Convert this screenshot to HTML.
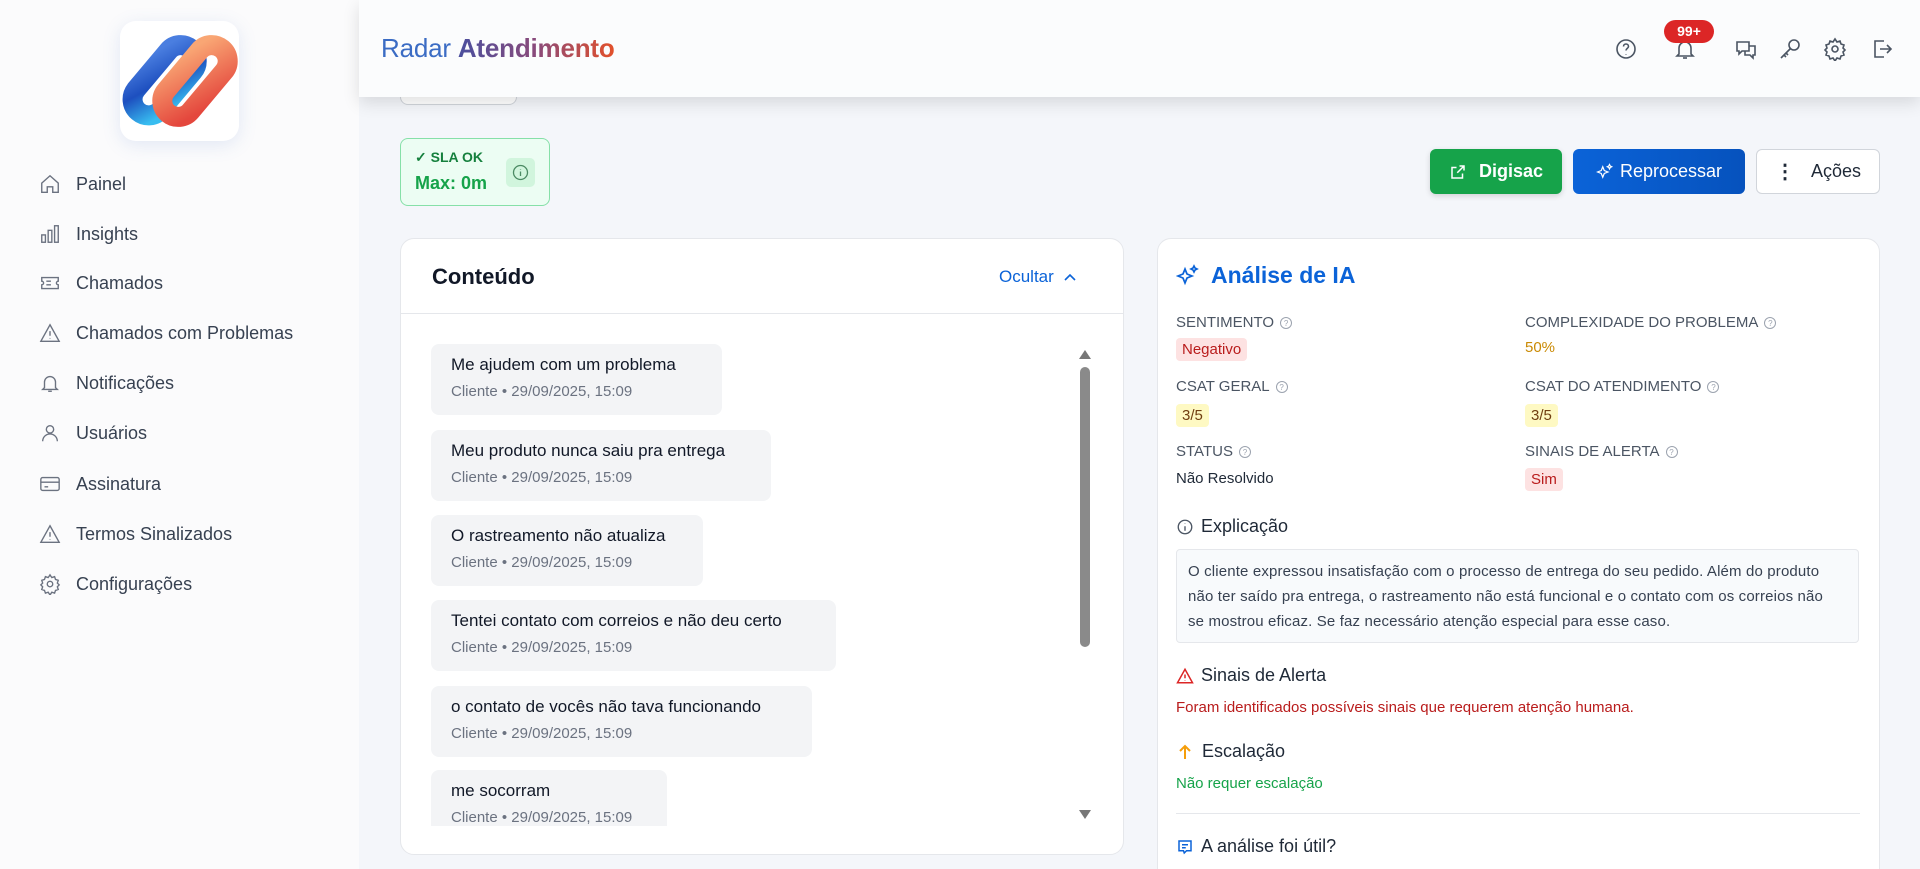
<!DOCTYPE html>
<html><head><meta charset="utf-8"><style>
*{box-sizing:border-box;margin:0;padding:0}
html,body{width:1920px;height:869px;overflow:hidden}
body{background:#f4f6fa;font-family:"Liberation Sans",sans-serif;color:#1f2937;position:relative}
.abs{position:absolute}
.side{left:0;top:0;width:359px;height:869px;background:#fbfbfc}
.logo{left:120px;top:21px;width:119px;height:120px;background:#fff;border-radius:16px;box-shadow:0 4px 18px rgba(80,120,200,.15);overflow:hidden}
.nav{left:39px;font-size:18px;color:#374151;display:flex;align-items:center;height:30px}
.nav svg{width:22px;height:22px;margin-right:15px;stroke:#6b7280;fill:none;stroke-width:1.5}
.hdr{left:359px;top:0;width:1561px;height:97px;background:#fbfcfd;box-shadow:0 6px 16px rgba(0,0,0,.12)}
.ic{top:37px;width:24px;height:24px;stroke:#4b5563;fill:none;stroke-width:1.6}
.btn{top:149px;height:45px;border-radius:6px;display:flex;align-items:center;justify-content:center;font-size:18px}
.card{background:#fff;border:1px solid #e5e7eb;border-radius:14px}
.msg{left:431px;height:71px;background:#f3f4f6;border-radius:8px;padding:11px 20px 0}
.msg .t{font-size:17px;color:#111827}
.msg .m{font-size:15px;color:#6b7280;margin-top:8px}
.lab{font-size:15px;color:#4b5563;display:flex;align-items:center}
.lab i{display:inline-block;width:12px;height:12px;border:1px solid #9ca3af;border-radius:50%;margin-left:6px;font-size:8px;font-style:normal;color:#9ca3af;text-align:center;line-height:11px}
.badge{height:23px;padding:0 6px;border-radius:4px;font-size:15px;line-height:23px}
.h3{font-size:18px;color:#1f2937;display:flex;align-items:center}
</style></head><body>
<div class="abs side"></div>
<div class="abs logo">
<svg width="119" height="120" viewBox="0 0 119 120">
<defs><linearGradient id="b" x1="0" y1="1" x2="1" y2="0"><stop offset="0" stop-color="#38bdf0"/><stop offset=".5" stop-color="#1d4fbf"/><stop offset="1" stop-color="#4a7ee0"/></linearGradient>
<linearGradient id="o" x1="1" y1="0" x2="0" y2="1"><stop offset="0" stop-color="#f9a674"/><stop offset="1" stop-color="#e4473d"/></linearGradient></defs>
<g transform="rotate(-50 44 60)"><rect x="4" y="44" width="82" height="32" rx="16" fill="none" stroke="url(#b)" stroke-width="20"/></g>
<g transform="rotate(-50 75 60)"><rect x="33" y="44" width="84" height="32" rx="16" fill="none" stroke="url(#o)" stroke-width="20"/></g>
</svg></div>

<div class="abs nav" style="top:169px"><svg viewBox="0 0 24 24"><path d="M3 11l9-8 9 8v10h-6v-6h-6v6H3z"/></svg>Painel</div>
<div class="abs nav" style="top:219px"><svg viewBox="0 0 24 24"><rect x="3" y="13" width="4" height="8"/><rect x="10" y="8" width="4" height="13"/><rect x="17" y="3" width="4" height="18"/></svg>Insights</div>
<div class="abs nav" style="top:268px"><svg viewBox="0 0 24 24"><path d="M3 6h18v4a2 2 0 000 4v4H3v-4a2 2 0 000-4z"/><path d="M8 10h5M8 14h5"/></svg>Chamados</div>
<div class="abs nav" style="top:318px"><svg viewBox="0 0 24 24"><path d="M12 3l10 18H2z"/><path d="M12 10v5M12 18v.5"/></svg>Chamados com Problemas</div>
<div class="abs nav" style="top:368px"><svg viewBox="0 0 24 24"><path d="M6 17V11a6 6 0 0112 0v6l2 2H4z"/><path d="M10 21h4"/></svg>Notificações</div>
<div class="abs nav" style="top:418px"><svg viewBox="0 0 24 24"><circle cx="12" cy="8" r="4"/><path d="M4 21a8 8 0 0116 0"/></svg>Usuários</div>
<div class="abs nav" style="top:469px"><svg viewBox="0 0 24 24"><rect x="2" y="5" width="20" height="14" rx="2"/><path d="M2 10h20M6 15h4"/></svg>Assinatura</div>
<div class="abs nav" style="top:519px"><svg viewBox="0 0 24 24"><path d="M12 3l10 18H2z"/><path d="M12 10v5M12 18v.5"/></svg>Termos Sinalizados</div>
<div class="abs nav" style="top:569px"><svg viewBox="0 0 24 24"><circle cx="12" cy="12" r="3"/><path d="M12 2l2 3 3-1 1 3 3 1-1 3 2 2-2 2 1 3-3 1-1 3-3-1-2 3-2-3-3 1-1-3-3-1 1-3-2-2 2-2-1-3 3-1 1-3 3 1z"/></svg>Configurações</div>

<div class="abs" style="left:400px;top:60px;width:117px;height:45px;border:1px solid #d1d5db;border-radius:8px;background:#fff"></div>
<div class="abs" style="left:728px;top:70px;font-size:24px;font-weight:bold">g</div>

<div class="abs hdr"></div>
<div class="abs" style="left:381px;top:33px;font-size:26px;letter-spacing:-.2px"><span style="color:#3b6cc4">Radar</span> <b style="background:linear-gradient(90deg,#4a4f9e,#8a4a7a 50%,#e3502a);-webkit-background-clip:text;color:transparent">Atendimento</b></div>

<svg class="abs ic" style="left:1614px" viewBox="0 0 24 24"><circle cx="12" cy="12" r="9"/><path d="M9.5 9.5a2.5 2.5 0 115 0c0 1.8-2.5 2-2.5 4M12 17v.5"/></svg>
<svg class="abs ic" style="left:1673px" viewBox="0 0 24 24"><path d="M6 17V11a6 6 0 0112 0v6l2 2H4z"/><path d="M10 21h4"/></svg>
<div class="abs" style="left:1664px;top:20px;width:50px;height:23px;background:#dc2626;color:#fff;border-radius:12px;font-size:14px;font-weight:bold;text-align:center;line-height:23px">99+</div>
<svg class="abs ic" style="left:1734px" viewBox="0 0 24 24"><path d="M3 5h12v9H8l-3 3v-3H3z"/><path d="M15 9h6v9h-2v3l-3-3h-5v-4"/></svg>
<svg class="abs ic" style="left:1778px" viewBox="0 0 24 24"><circle cx="16" cy="8" r="5"/><path d="M12.5 11.5L3 21M6 18l2 2M8 16l2 2"/></svg>
<svg class="abs ic" style="left:1823px" viewBox="0 0 24 24"><circle cx="12" cy="12" r="3"/><path d="M12 2l2 3 3-1 1 3 3 1-1 3 2 2-2 2 1 3-3 1-1 3-3-1-2 3-2-3-3 1-1-3-3-1 1-3-2-2 2-2-1-3 3-1 1-3 3 1z"/></svg>
<svg class="abs ic" style="left:1870px" viewBox="0 0 24 24"><path d="M14 4H5v16h9"/><path d="M10 12h11M17 8l4 4-4 4"/></svg>

<div class="abs" style="left:400px;top:138px;width:150px;height:68px;background:#ecfdf3;border:1px solid #86e0a8;border-radius:8px"></div>
<div class="abs" style="left:415px;top:149px;font-size:14px;font-weight:bold;color:#15803d">✓ SLA OK</div>
<div class="abs" style="left:415px;top:173px;font-size:18px;font-weight:bold;color:#16a34a">Max: 0m</div>
<div class="abs" style="left:506px;top:158px;width:29px;height:29px;background:#d1f5dd;border-radius:5px"><svg width="29" height="29" viewBox="0 0 29 29" fill="none" stroke="#4b8a63" stroke-width="1.3"><circle cx="14.5" cy="14.5" r="7"/><path d="M14.5 13.5v4.5M14.5 11v.5"/></svg></div>

<div class="abs btn" style="left:1430px;width:132px;background:#16a34a;color:#fff;font-weight:bold;box-shadow:0 2px 6px rgba(0,0,0,.15)"><svg width="18" height="18" viewBox="0 0 24 24" fill="none" stroke="#fff" stroke-width="2" style="margin-right:12px"><path d="M14 4h6v6M20 4l-9 9M18 14v6H4V6h6"/></svg>Digisac</div>
<div class="abs btn" style="left:1573px;width:172px;background:linear-gradient(90deg,#0b63d8,#0652bd);color:#fff"><svg width="18" height="18" viewBox="0 0 24 24" fill="none" stroke="#fff" stroke-width="1.6" style="margin-right:6px"><path d="M9 5l2 5 5 2-5 2-2 5-2-5-5-2 5-2zM18 2l1 2 2 1-2 1-1 2-1-2-2-1 2-1z"/></svg>Reprocessar</div>
<div class="abs btn" style="left:1756px;width:124px;background:#fff;border:1px solid #d1d5db;color:#1f2937"><span style="font-weight:bold;margin-right:16px;font-size:20px">⋮</span>Ações</div>

<div class="abs card" style="left:400px;top:238px;width:724px;height:617px;overflow:hidden">
<div style="height:75px;border-bottom:1px solid #e5e7eb;position:relative">
<div class="abs" style="left:31px;top:25px;font-size:22px;font-weight:bold;color:#111827">Conteúdo</div>
<div class="abs" style="left:598px;top:28px;font-size:17px;color:#0b63d8">Ocultar <svg width="14" height="10" viewBox="0 0 14 10" fill="none" stroke="#0b63d8" stroke-width="1.6" style="margin-left:4px"><path d="M2 8l5-5 5 5"/></svg></div>
</div></div>
<div class="abs" style="left:401px;top:314px;width:722px;height:512px;overflow:hidden">
<div class="abs msg" style="left:30px;top:30px;width:291px"><div class="t">Me ajudem com um problema</div><div class="m">Cliente • 29/09/2025, 15:09</div></div>
<div class="abs msg" style="left:30px;top:116px;width:340px"><div class="t">Meu produto nunca saiu pra entrega</div><div class="m">Cliente • 29/09/2025, 15:09</div></div>
<div class="abs msg" style="left:30px;top:201px;width:272px"><div class="t">O rastreamento não atualiza</div><div class="m">Cliente • 29/09/2025, 15:09</div></div>
<div class="abs msg" style="left:30px;top:286px;width:405px"><div class="t">Tentei contato com correios e não deu certo</div><div class="m">Cliente • 29/09/2025, 15:09</div></div>
<div class="abs msg" style="left:30px;top:372px;width:381px"><div class="t">o contato de vocês não tava funcionando</div><div class="m">Cliente • 29/09/2025, 15:09</div></div>
<div class="abs msg" style="left:30px;top:456px;width:236px"><div class="t">me socorram</div><div class="m">Cliente • 29/09/2025, 15:09</div></div>
</div>
<div class="abs" style="left:1079px;top:350px;width:0;height:0;border-left:6px solid transparent;border-right:6px solid transparent;border-bottom:9px solid #777"></div>
<div class="abs" style="left:1080px;top:367px;width:10px;height:280px;background:#8a8a8a;border-radius:5px"></div>
<div class="abs" style="left:1079px;top:810px;width:0;height:0;border-left:6px solid transparent;border-right:6px solid transparent;border-top:9px solid #777"></div>

<div class="abs card" style="left:1157px;top:238px;width:723px;height:650px"></div>
<svg class="abs" style="left:1176px;top:264px" width="24" height="24" viewBox="0 0 24 24" fill="none" stroke="#0b63d8" stroke-width="1.7"><path d="M9 5l2 5 5 2-5 2-2 5-2-5-5-2 5-2zM18 2l1 2 2 1-2 1-1 2-1-2-2-1 2-1z"/></svg>
<div class="abs" style="left:1211px;top:262px;font-size:23px;font-weight:bold;color:#0b63d8">Análise de IA</div>

<div class="abs lab" style="left:1176px;top:314px">SENTIMENTO<i>?</i></div>
<div class="abs lab" style="left:1525px;top:314px">COMPLEXIDADE DO PROBLEMA<i>?</i></div>
<div class="abs badge" style="left:1176px;top:338px;background:#fde2e2;color:#b91c1c">Negativo</div>
<div class="abs" style="left:1525px;top:339px;font-size:15px;color:#ca8a04">50%</div>
<div class="abs lab" style="left:1176px;top:378px">CSAT GERAL<i>?</i></div>
<div class="abs lab" style="left:1525px;top:378px">CSAT DO ATENDIMENTO<i>?</i></div>
<div class="abs badge" style="left:1176px;top:404px;background:#fef9c3;color:#713f12">3/5</div>
<div class="abs badge" style="left:1525px;top:404px;background:#fef9c3;color:#713f12">3/5</div>
<div class="abs lab" style="left:1176px;top:443px">STATUS<i>?</i></div>
<div class="abs lab" style="left:1525px;top:443px">SINAIS DE ALERTA<i>?</i></div>
<div class="abs" style="left:1176px;top:470px;font-size:15px;color:#1f2937">Não Resolvido</div>
<div class="abs badge" style="left:1525px;top:468px;background:#fde2e2;color:#b91c1c">Sim</div>

<div class="abs h3" style="left:1176px;top:516px"><svg width="18" height="18" viewBox="0 0 24 24" fill="none" stroke="#4b5563" stroke-width="1.8" style="margin-right:7px"><circle cx="12" cy="12" r="9"/><path d="M12 11v6M12 7.5v.5"/></svg>Explicação</div>
<div class="abs" style="left:1176px;top:549px;width:683px;height:94px;background:#f8fafc;border:1px solid #e5e7eb;border-radius:4px;padding:9px 30px 9px 11px;font-size:15px;line-height:25px;color:#374151;letter-spacing:.15px">O cliente expressou insatisfação com o processo de entrega do seu pedido. Além do produto não ter saído pra entrega, o rastreamento não está funcional e o contato com os correios não se mostrou eficaz. Se faz necessário atenção especial para esse caso.</div>

<div class="abs h3" style="left:1176px;top:665px"><svg width="18" height="18" viewBox="0 0 24 24" fill="none" stroke="#dc2626" stroke-width="2" style="margin-right:7px"><path d="M12 3l10 18H2z"/><path d="M12 10v5M12 18v.5"/></svg>Sinais de Alerta</div>
<div class="abs" style="left:1176px;top:699px;font-size:15px;color:#b91c1c">Foram identificados possíveis sinais que requerem atenção humana.</div>
<div class="abs h3" style="left:1176px;top:741px"><svg width="14" height="18" viewBox="0 0 14 18" fill="none" stroke="#f59e0b" stroke-width="2" style="margin-right:10px;margin-left:2px"><path d="M7 16V3M2 8l5-5 5 5"/></svg>Escalação</div>
<div class="abs" style="left:1176px;top:775px;font-size:15px;color:#16a34a">Não requer escalação</div>
<div class="abs" style="left:1176px;top:813px;width:684px;height:1px;background:#e5e7eb"></div>
<div class="abs h3" style="left:1176px;top:836px"><svg width="18" height="18" viewBox="0 0 24 24" fill="none" stroke="#0b63d8" stroke-width="2" style="margin-right:7px"><path d="M4 4h16v13h-6l-3 3-1-3H4z"/><path d="M8 9h8M8 13h5"/></svg>A análise foi útil?</div>
</body></html>
